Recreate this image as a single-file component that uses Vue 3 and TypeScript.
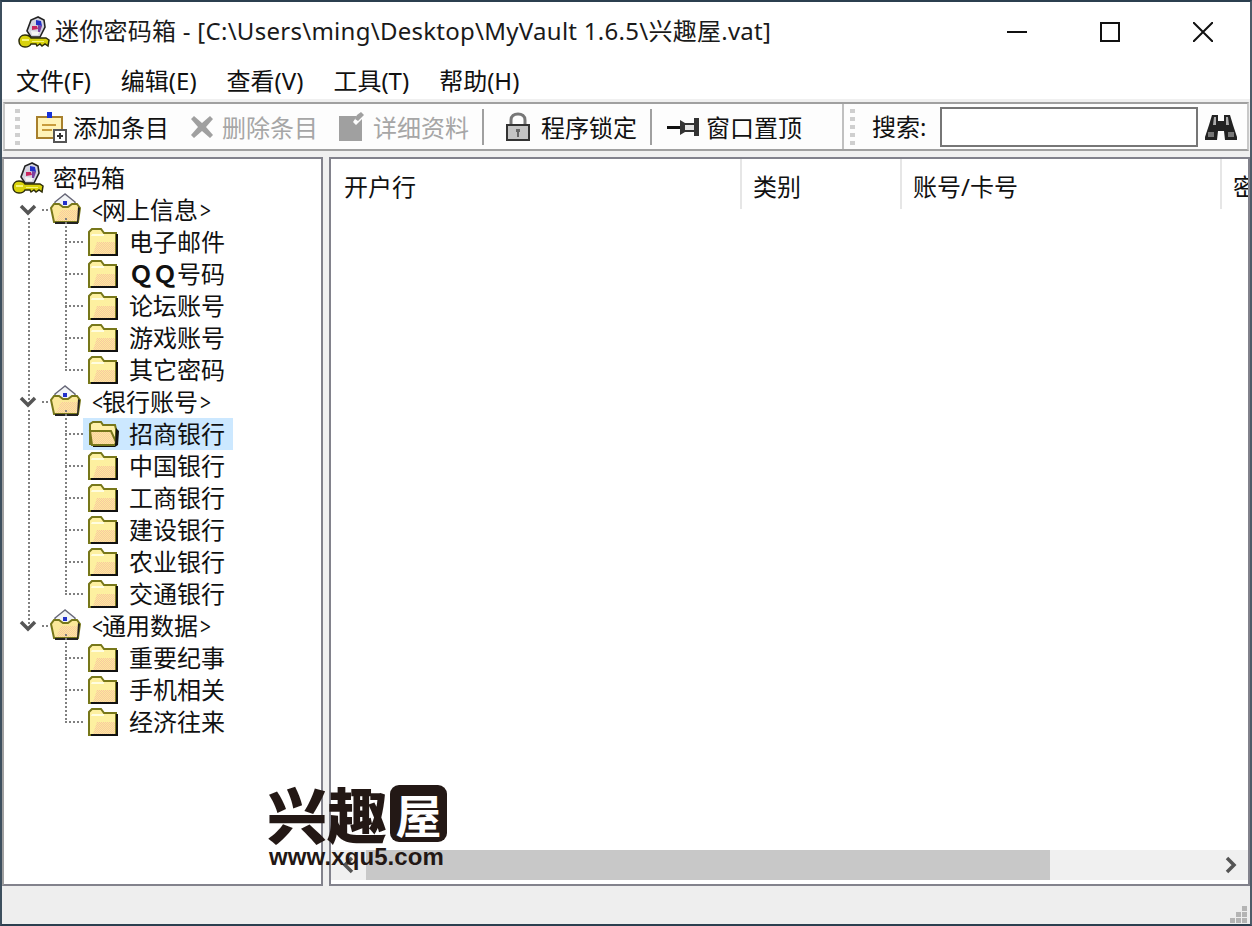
<template>
  <div class="window">
    <svg class="icon-defs" width="0" height="0" aria-hidden="true">
      <defs>
        <pattern id="dither" width="2" height="2" patternUnits="userSpaceOnUse">
          <rect width="2" height="2" fill="#fdeb9c" />
          <rect width="1" height="1" fill="#f8c8a0" />
          <rect x="1" y="1" width="1" height="1" fill="#f8c8a0" />
        </pattern>
        <symbol id="key" viewBox="0 0 32 32">
          <path d="M20 1l-7 3-4 11 4 6 9 0 5-10-1-7z" fill="#d4d4e0" stroke="#222" stroke-width="1.6" />
          <path d="M18 4l5 1 1 5-6-1z" fill="#2231c8" />
          <path d="M14 10l5 0 1 3-6 1z" fill="#c8245c" />
          <path d="M20 9l4 1-2 6-2 0z" fill="#7a3fa0" />
          <path d="M13 15l8 1-1 3-6 0z" fill="#f4f4f4" />
          <path d="M7 19c-4 0-6 3-6 6 0 4 3 6 6 6 3 0 5-1 6-3h5l1 2 3-2 2 2 3-2 3 2 1-6-3-2H13c-1-2-3-3-6-3z" fill="#d8d20c" stroke="#2c2c08" stroke-width="1.5" />
          <path d="M4 23h7v2H4zM14 25h12v1H14z" fill="#f8f67a" />
        </symbol>
        <symbol id="folder" viewBox="0 0 32 28">
          <path d="M2 27V4l3-3h9l3 4h12v22z" fill="#fdf0a0" stroke="#77771a" stroke-width="2" />
          <path d="M4 8h13V6H5z" fill="#fffde0" />
          <path d="M10 14h18v12H6z" fill="url(#dither)" />
          <path d="M29 6h2v22H4v-2h25z" fill="#111" />
        </symbol>
        <symbol id="folder-open" viewBox="0 0 32 28">
          <path d="M3 24V4l3-2h8l2 3h12l1 4v7l-3 9z" fill="#fff0a8" stroke="#77771a" stroke-width="2" />
          <path d="M3 11h21l5 11-1 3H5z" fill="url(#dither)" stroke="#77771a" stroke-width="2" />
          <path d="M29 8l3 3-1 14-3 2H6v-1h22z" fill="#111" />
        </symbol>
        <symbol id="folder-net" viewBox="0 0 32 32">
          <path d="M16 1L6 9v6h20V9z" fill="#f2f4f6" stroke="#667" stroke-width="1.5" />
          <path d="M14 8h4v4h-4z" fill="#2231c8" />
          <path d="M5 11h5l4 3h5l4-3h5l3 4-2 14H5L2 15z" fill="#fbe89a" stroke="#77771a" stroke-width="2" />
          <path d="M12 17h17v11H7z" fill="url(#dither)" />
          <path d="M29 14l2 1-2 16H6v-2h22z" fill="#222" />
        </symbol>
      </defs>
    </svg>

    <header class="title-bar">
      <svg class="title-icon"><use href="#key" /></svg>
      <span class="title-text">迷你密码箱 - [C:\Users\ming\Desktop\MyVault 1.6.5\兴趣屋.vat]</span>
      <div class="win-buttons">
        <svg class="win-btn" viewBox="0 0 20 20"><path d="M0 10h20" /></svg>
        <svg class="win-btn" viewBox="0 0 20 20"><path d="M1 1h18v18H1z" /></svg>
        <svg class="win-btn" viewBox="0 0 20 20"><path d="M0 0l20 20M20 0L0 20" /></svg>
      </div>
    </header>

    <nav class="menu-bar">
      <span v-for="item in menus" :key="item">{{ item }}</span>
    </nav>

    <div class="toolbars">
      <div class="toolbar">
        <div class="band-main">
          <i class="grip"></i>
          <div class="tool tool-add">
            <svg viewBox="0 0 32 32">
              <path d="M2 6h25v21H2z" fill="#fff3b8" stroke="#a8802c" stroke-width="2" />
              <path d="M7 13h14v2H7zM7 18h10v2H7z" fill="#c89c3c" />
              <path d="M12 1h5v6h-5z" fill="#1530d8" />
              <path d="M19 19h12v12H19z" fill="#fff" stroke="#555" stroke-width="2" />
              <path d="M24 22h2v6h-2zM22 24h6v2h-6z" fill="#333" />
            </svg>
            <span>添加条目</span>
          </div>
          <div class="tool tool-delete disabled">
            <svg viewBox="0 0 24 24">
              <path d="M4 1l8 7 8-7 3 3-7 8 7 8-3 3-8-7-8 7-3-3 7-8-7-8z" fill="#a0a0a0" />
            </svg>
            <span>删除条目</span>
          </div>
          <div class="tool tool-detail disabled">
            <svg viewBox="0 0 26 30">
              <path d="M1 4h18l-4 6 3 3 6-6v22H1z" fill="#a0a0a0" />
              <path d="M19 3l4-3 3 3-6 6-3-2z" fill="#a0a0a0" />
            </svg>
            <span>详细资料</span>
          </div>
          <i class="divider"></i>
          <div class="tool tool-lock">
            <svg viewBox="0 0 26 30">
              <path d="M6 14V8c0-4 3-6 7-6s7 2 7 6v6" fill="none" stroke="#777" stroke-width="3" />
              <path d="M2 13h22v15H2z" fill="#c4c4c4" stroke="#333" stroke-width="2" />
              <path d="M11 17h4v3h-1v5h-2v-5h-1z" fill="#666" />
            </svg>
            <span>程序锁定</span>
          </div>
          <i class="divider"></i>
          <div class="tool tool-pin">
            <svg viewBox="0 0 33 18">
              <path d="M0 8h13v3H0z" fill="#111" />
              <path d="M13 2l5 3h9V0h5v18h-5v-4h-9l-5 3z" fill="#333" />
              <path d="M18 7h9v5h-9z" fill="#e4e4e4" />
            </svg>
            <span>窗口置顶</span>
          </div>
        </div>
        <div class="band-search">
          <i class="grip"></i>
          <label class="search-label">搜索:</label>
          <input class="search-input" type="text" />
          <svg class="binoculars" viewBox="0 0 32 28">
            <path d="M7 2h6v6h6V2h6l3 10 4 12v3H20l-1-9h-6l-1 9H0v-3l4-12z" fill="#222" />
            <path d="M9 4h2v8H8zM21 4h2l1 8h-3z" fill="#aaa" />
            <path d="M3 19h6v5H3zM23 19h6v5h-6z" fill="#777" />
          </svg>
        </div>
      </div>
    </div>

    <main class="content">
      <aside class="pane tree">
        <div class="node root-node">
          <svg class="node-key"><use href="#key" /></svg>
          <span>密码箱</span>
        </div>
        <section v-for="group in groups" :key="group.name" class="tree-group">
          <div class="node group-node">
            <svg class="chevron" viewBox="0 0 18 12"><path d="M2 2l7 7 7-7" /></svg>
            <svg class="folder-net"><use href="#folder-net" /></svg>
            <span class="group-name"><span class="bracket">&lt;</span>{{ group.name }}<span class="bracket end">&gt;</span></span>
          </div>
          <div class="children">
            <div
              v-for="child in group.items"
              :key="child"
              class="node child-node"
              :class="{ selected: child === selected }"
            >
              <div class="child-body">
                <svg class="folder"><use :href="child === selected ? '#folder-open' : '#folder'" /></svg>
                <span v-if="child.startsWith('ＱＱ')"><b>ＱＱ</b>{{ child.slice(2) }}</span>
                <span v-else>{{ child }}</span>
              </div>
            </div>
          </div>
        </section>
      </aside>

      <section class="pane list">
        <div class="list-head">
          <div v-for="col in columns" :key="col.name" class="col" :class="col.cls">{{ col.name }}</div>
        </div>
        <div class="list-body"></div>
        <div class="h-scroll">
          <svg class="arrow" viewBox="0 0 14 18"><path d="M11 2L4 9l7 7" /></svg>
          <div class="thumb"></div>
          <svg class="arrow" viewBox="0 0 14 18"><path d="M3 2l7 7-7 7" /></svg>
        </div>
      </section>

      <div class="watermark">
        <div class="wm-title">
          <span class="wm-chars">兴趣</span>
          <span class="wm-box">屋</span>
        </div>
        <div class="wm-url">www.xqu5.com</div>
      </div>
    </main>

    <footer class="status-bar">
      <svg class="size-grip" viewBox="0 0 18 18">
        <path d="M12 0h5v5h-5zM6 6h5v5H6zM12 6h5v5h-5zM0 12h5v5H0zM6 12h5v5H6zM12 12h5v5h-5z" />
      </svg>
    </footer>
  </div>
</template>

<script setup lang="ts">
interface TreeGroup {
  name: string
  items: string[]
}

const menus = ['文件(F)', '编辑(E)', '查看(V)', '工具(T)', '帮助(H)']

const groups: TreeGroup[] = [
  { name: '网上信息', items: ['电子邮件', 'ＱＱ号码', '论坛账号', '游戏账号', '其它密码'] },
  { name: '银行账号', items: ['招商银行', '中国银行', '工商银行', '建设银行', '农业银行', '交通银行'] },
  { name: '通用数据', items: ['重要纪事', '手机相关', '经济往来'] },
]

const selected = '招商银行'

const columns = [
  { name: '开户行', cls: 'col-bank' },
  { name: '类别', cls: 'col-type' },
  { name: '账号/卡号', cls: 'col-card' },
  { name: '密码', cls: 'col-pass' },
]
</script>

<style>
html,
body {
  margin: 0;
  background: #fff;
}
</style>

<style scoped>
.window {
  width: 1252px;
  height: 926px;
  box-sizing: border-box;
  display: flex;
  flex-direction: column;
  position: relative;
  overflow: hidden;
  background: #fff;
  border-top: 2px solid #2b3f4f;
  border-bottom: 2px solid #2b3f4f;
  border-left: 2px solid #3d4f5e;
  border-right: 2px solid #4d5b68;
  color: #111;
  font-family: "Noto Sans", "Noto Sans CJK SC", sans-serif;
  font-size: 24px;
}

.icon-defs {
  position: absolute;
}

.title-bar {
  height: 60px;
  flex: none;
  box-sizing: border-box;
  padding: 0 0 0 16px;
  display: flex;
  align-items: center;
}

.title-icon {
  width: 32px;
  height: 32px;
  margin-right: 5px;
  margin-top: -1px;
}

.title-text {
  white-space: nowrap;
  color: #1a1a1a;
  letter-spacing: 0.27px;
  margin-top: -6px;
}

.win-buttons {
  margin-left: auto;
  display: flex;
  gap: 73px;
  padding-right: 37px;
  align-items: center;
}

.win-btn {
  width: 20px;
  height: 20px;
  fill: none;
  stroke: #111;
  stroke-width: 2;
}

.menu-bar {
  height: 37px;
  flex: none;
  display: flex;
  align-items: center;
  gap: 30px;
  padding-left: 14px;
  line-height: 1;
}

.toolbars {
  height: 58px;
  flex: none;
  box-sizing: border-box;
  padding: 3px 1px 6px 1px;
  background: #f0f0f0;
}

.toolbar {
  box-sizing: border-box;
  height: 49px;
  border: 2px solid #a0a0a0;
  border-left-color: #c8c8c8;
  border-right-color: #c8c8c8;
  background: #fdfdfd;
  display: flex;
  align-items: center;
}

.band-main {
  width: 839px;
  height: 100%;
  flex: none;
  box-sizing: border-box;
  border-right: 2px solid #c0c0c0;
  display: flex;
  align-items: center;
}

.band-search {
  flex: 1;
  height: 100%;
  display: flex;
  align-items: center;
}

.grip {
  width: 5px;
  height: 36px;
  flex: none;
  margin-left: 10px;
  background: repeating-linear-gradient(to bottom, #cfcfcf 0 4px, transparent 4px 8px);
}

.band-search .grip {
  margin-left: 6px;
}

.tool {
  display: flex;
  align-items: center;
  line-height: 1;
  white-space: nowrap;
}

.tool span {
  margin-top: 2px;
}

.disabled {
  color: #a6a6a6;
}

.tool-add {
  gap: 6px;
  margin-left: 15px;
}

.tool-add svg {
  width: 32px;
  height: 32px;
}

.tool-delete {
  gap: 8px;
  margin-left: 21px;
}

.tool-delete svg {
  width: 24px;
  height: 24px;
}

.tool-detail {
  gap: 9px;
  margin-left: 20px;
}

.tool-detail svg {
  width: 26px;
  height: 30px;
}

.divider {
  width: 2px;
  height: 36px;
  flex: none;
  background: #a0a0a0;
  margin: 0 15px 0 13px;
}

.tool-lock {
  gap: 10px;
  margin-left: 6px;
}

.tool-lock svg {
  width: 26px;
  height: 30px;
}

.tool-pin {
  gap: 6px;
}

.tool-pin svg {
  width: 33px;
  height: 18px;
}

.search-label {
  margin-left: 17px;
  width: 68px;
  flex: none;
  line-height: 1;
}

.search-input {
  width: 258px;
  height: 40px;
  flex: none;
  box-sizing: border-box;
  border: 2px solid #767676;
  background: #fff;
  outline: none;
}

.binoculars {
  width: 32px;
  height: 28px;
  margin-left: 7px;
  flex: none;
}

.content {
  flex: 1;
  min-height: 0;
  display: flex;
  gap: 6px;
  background: #f0f0f0;
  position: relative;
}

.pane {
  box-sizing: border-box;
  border: 2px solid #82828c;
  background: #fff;
}

.tree {
  width: 321px;
  flex: none;
  padding-top: 3px;
  line-height: 1;
  border-left-color: #a0a0a0;
}

.list {
  flex: 1;
  min-width: 0;
  display: flex;
  flex-direction: column;
}

.node {
  height: 32px;
  display: flex;
  align-items: center;
  white-space: nowrap;
  position: relative;
}

.root-node {
  padding-left: 8px;
}

.node-key {
  width: 32px;
  height: 32px;
  margin-right: 9px;
}

.tree-group {
  position: relative;
}

.tree-group:not(:last-child)::before {
  content: "";
  position: absolute;
  left: 24px;
  top: 24px;
  bottom: -16px;
  width: 2px;
  background: repeating-linear-gradient(to bottom, #808080 0 2px, transparent 2px 4px);
}

.chevron {
  width: 18px;
  height: 12px;
  margin-left: 15px;
  fill: none;
  stroke: #555;
  stroke-width: 3.5;
}

.folder-net {
  width: 32px;
  height: 32px;
  margin-left: 12px;
  margin-top: -3px;
  flex: none;
}

.group-node::after {
  content: "";
  position: absolute;
  left: 38px;
  width: 8px;
  top: 15px;
  height: 2px;
  background: repeating-linear-gradient(to right, #808080 0 2px, transparent 2px 4px);
}

.group-name {
  margin-left: 11px;
}

.bracket {
  display: inline-block;
  width: 10px;
  transform: scaleX(0.8);
  transform-origin: left center;
}

.bracket.end {
  margin-left: 2px;
  width: 12px;
}

.children {
  position: relative;
}

.children::before {
  content: "";
  position: absolute;
  left: 61px;
  top: -8px;
  bottom: 16px;
  width: 2px;
  background: repeating-linear-gradient(to bottom, #808080 0 2px, transparent 2px 4px);
}

.child-node::before {
  content: "";
  position: absolute;
  left: 61px;
  width: 20px;
  top: 15px;
  height: 2px;
  background: repeating-linear-gradient(to right, #808080 0 2px, transparent 2px 4px);
}

.child-body {
  margin-left: 79px;
  width: 150px;
  height: 32px;
  box-sizing: border-box;
  padding-left: 4px;
  display: flex;
  align-items: center;
  gap: 10px;
  position: relative;
}

.selected .child-body {
  background: #cce8ff;
}

.folder {
  width: 32px;
  height: 28px;
  flex: none;
}

.list-head {
  height: 50px;
  flex: none;
  display: flex;
  overflow: hidden;
  line-height: 1;
  white-space: nowrap;
}

.col {
  flex: none;
  box-sizing: border-box;
  padding-left: 14px;
  padding-top: 6px;
  display: flex;
  align-items: center;
  border-right: 2px solid #e6e6e6;
}

.col-bank {
  width: 411px;
  padding-left: 13px;
}

.col-type {
  width: 160px;
  padding-left: 11px;
}

.col-card {
  width: 320px;
  padding-left: 11px;
}

.col-pass {
  width: 160px;
  padding-left: 11px;
  border-right: 0;
}

.list-body {
  flex: 1;
  min-height: 0;
}

.h-scroll {
  height: 30px;
  flex: none;
  margin-bottom: 4px;
  background: #f0f0f0;
  display: flex;
  align-items: center;
  padding: 0 10px;
  gap: 11px;
}

.thumb {
  width: 684px;
  height: 30px;
  flex: none;
  background: #c8c8c8;
}

.arrow {
  width: 14px;
  height: 18px;
  flex: none;
  fill: none;
  stroke: #555;
  stroke-width: 3.5;
}

.h-scroll .arrow:last-child {
  margin-left: auto;
}

.watermark {
  position: absolute;
  left: 265px;
  top: 626px;
  color: #231815;
  line-height: 1;
  font-family: "Noto Sans CJK SC", sans-serif;
  font-weight: 900;
}

.wm-title {
  display: flex;
  align-items: center;
  gap: 3px;
}

.wm-chars {
  font-size: 60px;
  width: 120px;
  white-space: nowrap;
  overflow: visible;
}

.wm-box {
  width: 57px;
  height: 57px;
  border-radius: 9px;
  background: #231815;
  color: #fff;
  font-size: 46px;
  font-weight: 700;
  display: flex;
  align-items: center;
  justify-content: center;
}

.wm-url {
  font-family: "Liberation Sans", sans-serif;
  font-size: 24px;
  font-weight: 700;
  letter-spacing: 0.1px;
  margin-top: 2px;
  margin-left: 2px;
  white-space: nowrap;
}

.status-bar {
  height: 38px;
  flex: none;
  background: #eeeeee;
  display: flex;
  justify-content: flex-end;
  align-items: flex-end;
}

.size-grip {
  width: 18px;
  height: 18px;
  fill: #b4b4b4;
  margin: 0 2px 0 0;
}
</style>
